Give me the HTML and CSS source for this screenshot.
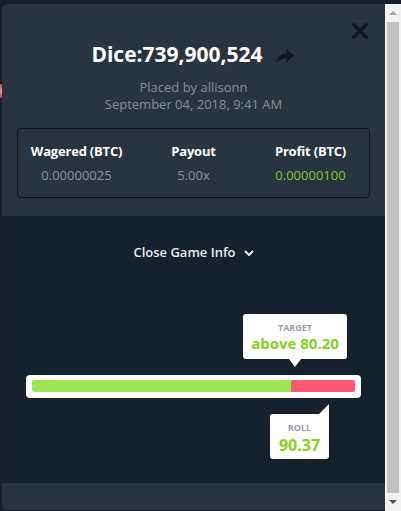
FILE: index.html
```html
<!DOCTYPE html>
<html lang="en">
<head>
  <meta charset="UTF-8">
  <meta name="viewport" content="width=device-width, initial-scale=1.0">
  <title>Dice · Game Info</title>
  <link rel="stylesheet" href="styles.css">
</head>
<body>
  <div class="backdrop-mark"></div>
  <div class="screen">
    <div class="modal">
      <div class="details">
        <button class="close" aria-label="Close">
          <svg viewBox="0 0 16 16" width="16" height="16"><path d="M2 2L14 14M14 2L2 14" stroke="#0f1820" stroke-width="3.4" stroke-linecap="square"/></svg>
        </button>
        <div class="title-row">
          <h2>Dice:739,900,524</h2>
          <svg class="share" viewBox="0 0 24 24" width="22" height="22"><path d="M13.5 4v4.6C6.8 9.5 3.6 14.4 2.6 20c2.6-3.8 6.1-5.4 10.9-5.4V19l8.2-7.5z" fill="#0f1921"/></svg>
        </div>
        <div class="meta">
          <div>Placed by allisonn</div>
          <div>September 04, 2018, 9:41 AM</div>
        </div>
        <div class="summary">
          <div class="stat">
            <div class="stat-label">Wagered (BTC)</div>
            <div class="stat-value">0.00000025</div>
          </div>
          <div class="stat">
            <div class="stat-label">Payout</div>
            <div class="stat-value">5.00x</div>
          </div>
          <div class="stat">
            <div class="stat-label">Profit (BTC)</div>
            <div class="stat-value win">0.00000100</div>
          </div>
        </div>
      </div>

      <div class="game">
        <div class="toggle">Close Game Info
          <svg viewBox="0 0 10 6" width="10" height="6"><path d="M1 1l4 4 4-4" fill="none" stroke="#e8ebee" stroke-width="2"/></svg>
        </div>

        <div class="slider">
          <div class="tip tip-target">
            <div class="tip-label">TARGET</div>
            <div class="tip-value">above 80.20</div>
          </div>
          <div class="track">
            <div class="track-win" style="width: 80.2%"></div>
            <div class="track-lose"></div>
          </div>
          <div class="tip tip-roll">
            <div class="tip-label">ROLL</div>
            <div class="tip-value big">90.37</div>
          </div>
        </div>
      </div>

      <div class="footer"></div>
    </div>

    <div class="scrollbar">
      <div class="arrow up"></div>
      <div class="thumb"></div>
      <div class="arrow down"></div>
    </div>
  </div>
</body>
</html>
```

FILE: styles.css
```css
body {
  margin: 0;
  background-color: #15202a;
  font-family: "Open Sans", Arial, sans-serif;
  height: 511px;
  overflow: hidden;
  position: relative;
}

.backdrop-mark {
  position: absolute;
  left: 0;
  top: 84px;
  width: 3px;
  height: 14px;
  background: linear-gradient(#b8405c, #d9a0ad 50%, #b8405c);
}

.screen {
  display: flex;
  padding: 4px 0 0 2px;
  height: 507px;
}

.modal {
  flex: 1;
  display: flex;
  flex-direction: column;
  height: 506px;
  border-radius: 6px 0 0 6px;
  overflow: hidden;
  position: relative;
}

.details {
  background-color: #283540;
  height: 212px;
  padding: 36px 15px 0;
  box-sizing: border-box;
  position: relative;
}

.close {
  position: absolute;
  top: 19px;
  right: 17px;
  padding: 0;
  border: none;
  background: none;
  width: 16px;
  height: 16px;
  cursor: pointer;
}

.close svg {
  display: block;
}

.title-row {
  display: flex;
  justify-content: center;
  align-items: center;
  gap: 11px;
  height: 28px;
}

.title-row h2 {
  margin: 0;
  color: #fff;
  font-size: 21px;
  font-weight: 700;
  letter-spacing: 0;
}

.share {
  margin-top: 3px;
}

.meta {
  margin-top: 11px;
  text-align: center;
  color: #868f97;
  font-size: 13px;
  line-height: 17px;
}

.summary {
  margin-top: 15px;
  display: grid;
  grid-template-columns: 1fr 1fr 1fr;
  border: 1.5px solid #0d151c;
  border-radius: 4px;
  padding: 14px 0 13px;
  text-align: center;
}

.stat-label {
  color: #fff;
  font-size: 13px;
  font-weight: 700;
  line-height: 17px;
  letter-spacing: -0.2px;
}

.stat-value {
  margin-top: 7px;
  color: #8a939b;
  font-size: 13px;
  line-height: 17px;
}

.stat-value.win {
  color: #7ccc2a;
}

.game {
  flex: 1;
  background-color: #15212c;
  padding-top: 28px;
}

.toggle {
  display: flex;
  justify-content: center;
  align-items: center;
  gap: 8px;
  color: #e8ebee;
  font-size: 13px;
  font-weight: 600;
  line-height: 17px;
}

.slider {
  position: relative;
  margin: 114px 24px 0;
}

.track {
  display: flex;
  background: #fff;
  border-radius: 4px;
  padding: 5px 6px 6px;
  height: 12px;
}

.track-win {
  background: #9de655;
  border-radius: 2px 0 0 2px;
}

.track-lose {
  flex: 1;
  background: #fe5a74;
  border-radius: 0 2px 2px 0;
}

.tip {
  position: absolute;
  background: #fff;
  border-radius: 3px;
  height: 45px;
  box-sizing: border-box;
  padding-top: 8px;
  text-align: center;
}

.tip-target {
  left: 217px;
  top: -61px;
  width: 104px;
}

.tip-target::after {
  content: "";
  position: absolute;
  left: 46px;
  bottom: -8px;
  border-left: 6px solid transparent;
  border-right: 6px solid transparent;
  border-top: 8px solid #fff;
}

.tip-roll {
  left: 244px;
  top: 39px;
  width: 59px;
  border-top-right-radius: 0;
}

.tip-roll::after {
  content: "";
  position: absolute;
  right: 0;
  top: -10px;
  border-left: 10px solid transparent;
  border-bottom: 10px solid #fff;
}

.tip-label {
  color: #98a1ab;
  font-size: 9px;
  font-weight: 700;
  line-height: 12px;
}

.tip-value {
  color: #86d11d;
  font-size: 15px;
  font-weight: 700;
  line-height: 18px;
}

.tip-value.big {
  font-size: 16px;
  line-height: 20px;
  margin-top: 1px;
}

.footer {
  height: 27px;
  background-color: #283540;
}

.scrollbar {
  width: 16px;
  display: flex;
  flex-direction: column;
  align-items: center;
  background: #f1f1f1;
}

.thumb {
  width: 12px;
  flex: 1;
  background: #c1c1c1;
  margin: 1px 0;
}

.arrow {
  height: 17px;
  width: 16px;
  position: relative;
}

.arrow::after {
  content: "";
  position: absolute;
  left: 4px;
  border-left: 4px solid transparent;
  border-right: 4px solid transparent;
}

.arrow.up::after {
  top: 7px;
  border-bottom: 4px solid #a3a3a3;
}

.arrow.down::after {
  top: 6px;
  border-top: 4px solid #505050;
}
```
